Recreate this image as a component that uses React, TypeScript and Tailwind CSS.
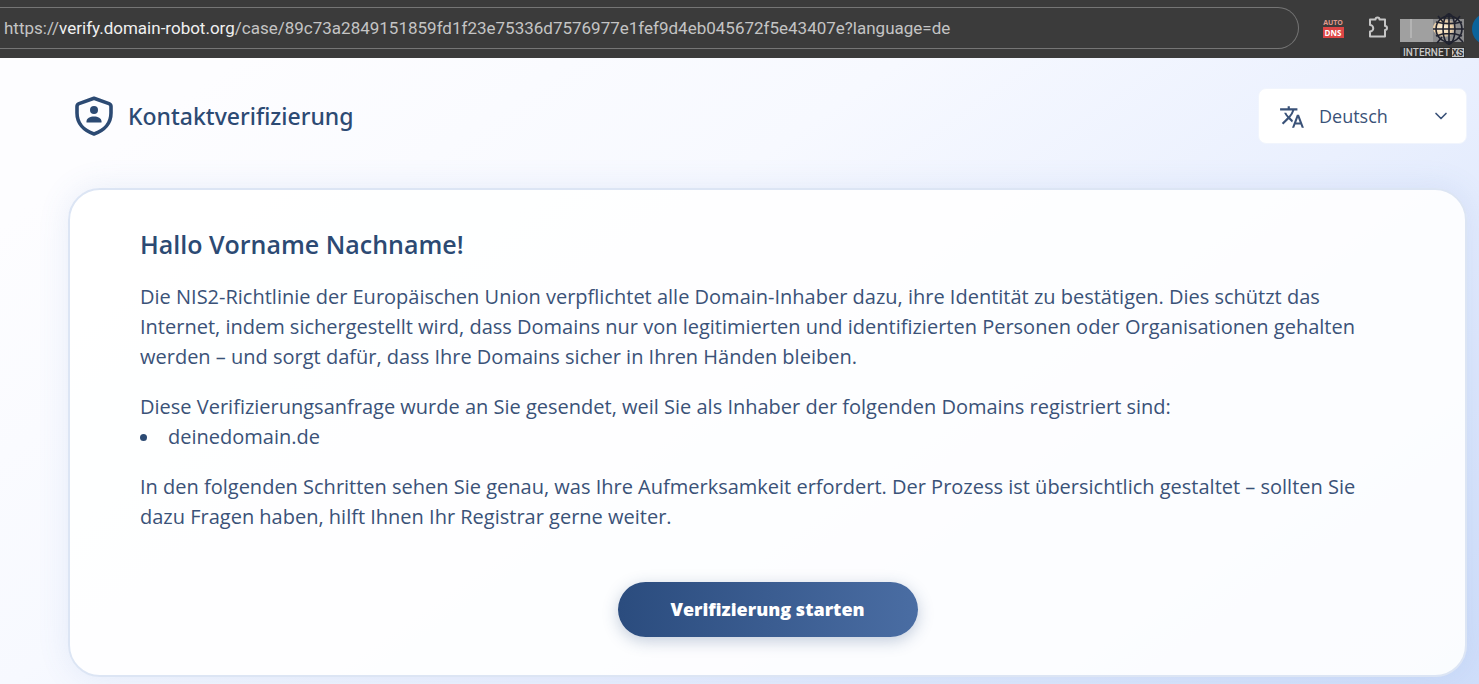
import React from "react";
import { MdTranslate } from "react-icons/md";
import { ChevronDown } from "lucide-react";

function BrandGlobe() {
  return (
    <svg viewBox="0 0 66 48" className="h-12 w-[66px]" role="img" aria-label="InternetXS">
      <defs>
        <radialGradient id="glow" cx="0.4" cy="0.5" r="0.6">
          <stop offset="0" stopColor="#fff6e0" />
          <stop offset="0.65" stopColor="#ecd0a8" />
          <stop offset="1" stopColor="#8d8d92" />
        </radialGradient>
      </defs>
      <rect x="0" y="9" width="64" height="23" fill="#a0a0a0" />
      <rect x="10" y="9" width="2" height="19" fill="#b4b4b4" />
      <rect x="33" y="9" width="31" height="23" fill="#8b8b8d" />
      <ellipse cx="45" cy="18" rx="12" ry="9" fill="url(#glow)" />
      <g fill="none" stroke="#20222f" strokeWidth="1.600">
        <circle cx="49" cy="19" r="13" />
        <ellipse cx="49" cy="19" rx="6" ry="15" />
        <path d="M49 3v32M33 19h31M36 12c8 2 18 2 26 0M36 26c8-3 18-3 26 0M38 6l5 6M60 6l-5 6M37 33l5-6M63 32l-5-5" />
      </g>
      <rect x="0" y="37" width="65" height="11" fill="#303030" />
      <rect x="52" y="38" width="12" height="9" fill="#c4c4c4" />
      <text x="3" y="46" fontFamily="Roboto, sans-serif" fontSize="10" fontWeight="500" fill="#c8c8c8">
        INTERNET
      </text>
      <text x="52" y="46" fontFamily="Roboto, sans-serif" fontSize="9" fontWeight="700" fill="#303030">
        XS
      </text>
    </svg>
  );
}

function BrowserBar() {
  return (
    <div className="flex h-[58px] items-center overflow-hidden bg-[#3b3b3b]">
      <div
        role="textbox"
        aria-label="Adresse"
        className="mb-0.5 flex h-[42px] min-w-0 flex-1 items-center overflow-hidden rounded-r-full border border-l-0 border-[#757575] pt-0.5 pl-1 font-['Roboto',sans-serif] text-[17px] whitespace-nowrap text-[#c4c4c4]"
      >
        <span>https://</span>
        <span className="text-[#f0f0f0]">verify.domain-robot.org</span>
        <span>/case/89c73a2849151859fd1f23e75336d7576977e1fef9d4eb045672f5e43407e?language=de</span>
      </div>
      <button
        type="button"
        className="mb-0.5 ml-[22px] flex w-6 flex-col items-center font-['Open_Sans',sans-serif] font-bold"
      >
        <span className="text-[7px] leading-[9px] text-[#e0998c]">AUTO</span>
        <span className="w-[21px] bg-[#dc4545] text-center text-[8px] leading-[11px] text-white">DNS</span>
      </button>
      <button type="button" aria-label="Erweiterungen" className="mb-1 ml-[21px]">
        <svg viewBox="0 0 24 24" className="size-6" fill="none" stroke="#c6c6c6" strokeWidth="2" strokeLinejoin="round">
          <path d="M4 4.500h5.500a2 2 0 0 1 4 0H19v6.500a2 2 0 0 1 0 4V21.500H4v-5a3.200 3.200 0 0 0 0-6.500Z" />
        </svg>
      </button>
      <div className="ml-2.5 self-end">
        <BrandGlobe />
      </div>
      <div className="ml-1.5 w-[7px] overflow-hidden">
        <div className="size-8 rounded-full bg-[#0b639b]" />
      </div>
    </div>
  );
}

function ShieldPerson() {
  return (
    <svg viewBox="0 0 38 40" className="h-10 w-[38px]" aria-hidden="true">
      <path
        d="M19 2.200 34 7.600Q36 8.300 36 10.500V17C36 27 29.500 34.500 19 38 8.500 34.500 2 27 2 17V10.500Q2 8.300 4 7.600Z"
        fill="none"
        stroke="currentColor"
        strokeWidth="3.600"
        strokeLinejoin="round"
      />
      <circle cx="19" cy="14" r="4" fill="currentColor" />
      <path d="M11.500 26.500v-1.200c0-3 3.600-4.800 7.500-4.800s7.500 1.800 7.500 4.800v1.200Z" fill="currentColor" />
    </svg>
  );
}

export default function App() {
  return (
    <div className="flex min-h-screen flex-col font-['Open_Sans',sans-serif] text-[#2c4a73]">
      <BrowserBar />
      <div className="flex-1 bg-[linear-gradient(145deg,#fdfdff_10%,#f7f9ff_38%,#eaf0fe_62%,#cfdefa_100%)] pr-3 pb-2 pl-[68px]">
        <header className="flex items-center justify-between pt-[30px] pl-[7px]">
          <div className="flex items-center gap-[15px]">
            <ShieldPerson />
            <h1 className="font-['Noto_Sans',sans-serif] text-[23px] font-medium">Kontaktverifizierung</h1>
          </div>
          <div className="relative text-lg text-[#3a5278]">
            <MdTranslate className="pointer-events-none absolute top-4 left-[21px] size-[26px]" aria-hidden="true" />
            <select
              aria-label="Sprache"
              defaultValue="de"
              className="h-14 w-[209px] appearance-none rounded-lg border border-[#f1f5fd] bg-white pr-12 pl-[60px]"
            >
              <option value="de">Deutsch</option>
              <option value="en">English</option>
            </select>
            <ChevronDown className="pointer-events-none absolute top-[18px] right-4 size-5" aria-hidden="true" />
          </div>
        </header>
        <main className="mt-11 rounded-[32px] border-2 border-[#dce5f4] bg-white/90 px-[70px] pt-9 pb-[38px] text-xl leading-[30px] text-[#3a5278] shadow-[0_0_32px_rgba(80,120,200,0.12)]">
          <h2 className="text-[25px] leading-9 font-semibold text-[#2c4a73]">Hallo Vorname Nachname!</h2>
          <p className="mt-5">
            Die NIS2-Richtlinie der Europäischen Union verpflichtet alle Domain-Inhaber dazu, ihre Identität zu
            bestätigen. Dies schützt das Internet, indem sichergestellt wird, dass Domains nur von legitimierten und
            identifizierten Personen oder Organisationen gehalten werden – und sorgt dafür, dass Ihre Domains sicher in
            Ihren Händen bleiben.
          </p>
          <p className="mt-5">
            Diese Verifizierungsanfrage wurde an Sie gesendet, weil Sie als Inhaber der folgenden Domains registriert
            sind:
          </p>
          <ul>
            <li className="flex items-center gap-[21px]">
              <span className="size-[7px] rounded-full bg-[#2c4a73]" />
              deinedomain.de
            </li>
          </ul>
          <p className="mt-5">
            In den folgenden Schritten sehen Sie genau, was Ihre Aufmerksamkeit erfordert. Der Prozess ist übersichtlich
            gestaltet – sollten Sie dazu Fragen haben, hilft Ihnen Ihr Registrar gerne weiter.
          </p>
          <div className="mt-[50px] flex justify-center">
            <button
              type="button"
              className="h-[55px] w-[300px] rounded-full bg-linear-to-r from-[#2b4c7e] to-[#4a6da3] pb-0.5 text-lg font-extrabold text-white shadow-[0_4px_16px_rgba(43,76,126,0.28)]"
            >
              Verifizierung starten
            </button>
          </div>
        </main>
      </div>
    </div>
  );
}
